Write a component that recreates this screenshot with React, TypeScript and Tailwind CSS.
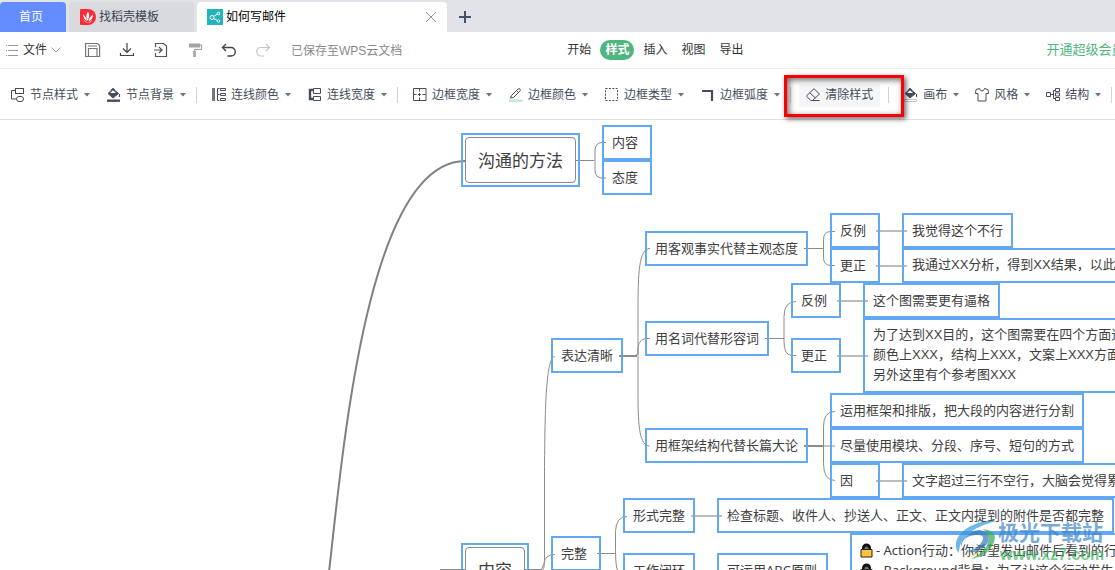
import React from "react";

function Icon({ children }: { children: React.ReactNode }) {
  return (
    <svg viewBox="0 0 14 14" className="size-3.5 shrink-0" fill="none" stroke="currentColor" strokeWidth="1" aria-hidden="true">
      {children}
    </svg>
  );
}

const icons = {
  nodeStyle: (
    <Icon>
      <rect x="4.5" y="0.5" width="8" height="5" />
      <rect x="5.5" y="8.5" width="7" height="5" rx="2.5" />
      <path d="M4.5 2.5h-4v8.5h5" />
    </Icon>
  ),
  bucket: (
    <Icon>
      <path d="M1 5.5 6 1l5.5 4.5L6 10z" fill="currentColor" />
      <path d="M3 5h6L6 2.2z" fill="#fff" stroke="none" />
      <path d="M4 2.5 6 .5l2 2M12.5 6v3" strokeWidth="1.2" />
      <path d="M0 12.7h13" strokeWidth="2.4" />
    </Icon>
  ),
  canvasBucket: (
    <Icon>
      <path d="M1 5.5 6 1l5.5 4.5L6 10z" fill="currentColor" />
      <path d="M3 5h6L6 2.2z" fill="#fff" stroke="none" />
      <path d="M4 2.5 6 .5l2 2M12.5 6v3" strokeWidth="1.2" />
      <path d="M.5 11.5h12v2H.5z" stroke="#c5c8cc" fill="#fff" />
    </Icon>
  ),
  lineColor: (
    <Icon>
      <path d="M1.5 0v13" stroke="#777" strokeWidth="3" />
      <path d="M5.5.5v12M5.5.5h2M5.5 6.5h2M5.5 12.5h2" />
      <path d="M8.5.5h5v2h-5zM8.5 5.5h5v2h-5zM8.5 10.5h5v2h-5z" />
    </Icon>
  ),
  lineWidth: (
    <Icon>
      <path d="M5 2H2v9h3" strokeWidth="2.4" />
      <path d="M5.5.5h7v5h-7zM5.5 8.5h7v4h-7z" fill="#fff" />
    </Icon>
  ),
  borderWidth: (
    <Icon>
      <path d="M.5.5h12.5v12H.5zM6.5.5v3M6.5 5v3M6.5 9.5v3M.5 6.5h3M5 6.5h3M9.5 6.5h3" />
    </Icon>
  ),
  borderColor: (
    <Icon>
      <path d="M2.500 7.500 9 1q1.500-.8 2 .2.900 1-.2 2L4.500 9.500l-3 .5zM7.500 2.500l2 2" />
      <path d="M0 12.7h13.5" stroke="#c9e8d2" strokeWidth="2.6" />
    </Icon>
  ),
  borderType: (
    <Icon>
      <rect x=".5" y=".5" width="12" height="12" strokeDasharray="2 1.4" />
    </Icon>
  ),
  borderRadius: (
    <Icon>
      <path d="M1 3h10v10" strokeWidth="2.2" />
    </Icon>
  ),
  eraser: (
    <Icon>
      <path d="M.8 7.5 8 .7l5.500 5.300L6.500 12.500H4.800L.8 8.500zM3.800 4.800l5.700 5.200M6 12.500h7.500" />
    </Icon>
  ),
  shirt: (
    <Icon>
      <path d="M4.500.5 1 1.500.5 5.500h2.500v7.500h8V5.500h2.500L13 1.500 9.500.5Q9 3 7 3T4.500.5z" />
    </Icon>
  ),
  structure: (
    <Icon>
      <path d="M.5 4.500h4v4h-4zM4.500 6.500h3M9.500 2.500h-2v8h2M9.500.5h4v3h-4zM9.500 5h4v3h-4zM9.500 9.500h4v3h-4z" />
    </Icon>
  ),
};

function Tool({ icon, label }: { icon: React.ReactNode; label: string }) {
  return (
    <button type="button" className="flex shrink-0 items-center gap-[5px] whitespace-nowrap">
      {icon}
      <span>{label}</span>
      <svg viewBox="0 0 6 4" className="ml-px h-1 w-1.5 shrink-0 text-[#6b7280]" fill="currentColor" aria-hidden="true">
        <path d="M0 0h6L3 3.5z" />
      </svg>
    </button>
  );
}

function Divider() {
  return <span className="h-4 w-px shrink-0 bg-[#cfd2d8]" />;
}

function Tabs() {
  return (
    <div className="flex h-8 shrink-0 items-end gap-[3px] bg-[#e1e3e8] text-xs">
      <button type="button" className="h-[30px] w-[66px] shrink-0 rounded-t-sm bg-[#638cff] pr-1 text-white">
        首页
      </button>
      <button type="button" className="flex h-[30px] w-[125px] shrink-0 items-center gap-[3px] rounded-t-sm bg-[#d8dade] pl-[11px] text-[#3c4353]">
        <svg viewBox="0 0 16 16" className="size-4" aria-hidden="true">
          <path d="M1 0h7a8 8 0 0 1 0 16H1a1 1 0 0 1-1-1V1a1 1 0 0 1 1-1z" fill="#fb2b37" />
          <path d="M8 2.500q2.500 4-.5 9.500-2.500-5 .5-9.500zM3 5q3 2.500 4 7Q3 9.500 3 5zM13 5.500q0 5-4.500 7Q9 8 13 5.500zM3 10.500l5 3.500 4.500-3q-2 3.200-4.500 3.200T3 10.500z" fill="#fff" />
        </svg>
        找稻壳模板
      </button>
      <div className="flex h-[30px] w-[250px] shrink-0 items-center gap-[3px] rounded-t-sm bg-white px-2.5 text-black">
        <svg viewBox="0 0 16 16" className="size-4" aria-hidden="true">
          <path d="M0 0h16v16H0z" fill="#1fb5bd" />
          <g fill="none" stroke="#fff">
            <circle cx="5" cy="8.5" r="2" />
            <circle cx="11.5" cy="4.5" r="1.3" />
            <circle cx="11.5" cy="12" r="1.3" />
            <path d="M6.5 7.5 10.5 5M6.5 9.5l4 2" />
          </g>
        </svg>
        <span>如何写邮件</span>
        <button type="button" aria-label="关闭" className="ml-auto text-[#8993b3]">
          <svg viewBox="0 0 12 12" className="size-3" fill="none" stroke="currentColor">
            <path d="m1 1 10 10M11 1 1 11" />
          </svg>
        </button>
      </div>
      <button type="button" aria-label="新建" className="ml-2 flex h-[30px] items-center text-[#43506f]">
        <svg viewBox="0 0 14 14" className="size-3.5" fill="none" stroke="currentColor" strokeWidth="2">
          <path d="M7 1v12M1 7h12" />
        </svg>
      </button>
    </div>
  );
}

function QuickButton({ label, tone, children }: { label: string; tone: string; children: React.ReactNode }) {
  return (
    <button type="button" aria-label={label} className={`shrink-0 ${tone}`}>
      <svg viewBox="0 0 16 16" className="size-4" fill="none" stroke="currentColor" strokeWidth="1.2">
        {children}
      </svg>
    </button>
  );
}

function MenuBar() {
  return (
    <div className="flex h-[37px] shrink-0 items-center border-b border-[#eeeff0] pl-1.5 text-xs whitespace-nowrap text-[#333]">
      <button type="button" className="flex shrink-0 items-center gap-1">
        <svg viewBox="0 0 13 12" className="h-3 w-[13px]" stroke="#999" aria-hidden="true">
          <path d="M0 1.5h1M2 1.5h10M0 6.500h1M2 6.500h10M0 11.500h1M2 11.500h10" />
        </svg>
        文件
        <svg viewBox="0 0 10 6" className="h-1.5 w-2.5" fill="none" stroke="#999" aria-hidden="true">
          <path d="m.5.5 4.500 4.500L9.500.5" />
        </svg>
      </button>
      <div className="ml-6 flex shrink-0 items-center gap-[18px]">
        <QuickButton label="保存" tone="text-[#777]">
          <path d="M.6 1.500h12l2 2v11H.6zM3.500 14V6.500h8.500V14M3 4h9" />
        </QuickButton>
        <QuickButton label="下载" tone="text-[#444]">
          <path d="M8 1v9M4 6.500l4 4 4-4M1.500 11v2.500h13V11" />
        </QuickButton>
        <QuickButton label="导入" tone="text-[#555]">
          <path d="M2.500 5V1.500h8L13.500 4v10.500h-11V11M1 8h8M6 5l3 3-3 3" />
        </QuickButton>
        <QuickButton label="格式刷" tone="text-[#a3a3a3]">
          <path d="M2 3.500h11" strokeWidth="4" />
          <path d="M13 3h1.500v4.500h-7v2" />
          <path d="M7.500 9v6" strokeWidth="2.6" />
        </QuickButton>
        <QuickButton label="撤销" tone="text-[#444]">
          <path d="M5 2 1.500 5.500 5 9M1.500 5.500H10a4.200 4.200 0 0 1 0 8.500H6.500" strokeWidth="1.4" />
        </QuickButton>
        <QuickButton label="重做" tone="text-[#c4c4c4]">
          <path d="m11 2 3.500 3.500L11 9M14.500 5.500H6A4.200 4.200 0 0 0 6 14h3.500" />
        </QuickButton>
      </div>
      <span className="ml-5 pt-0.5 text-[#8a8a8a]">已保存至WPS云文档</span>
      <nav className="ml-40 flex shrink-0 items-center">
        <button type="button" className="px-[5px]">开始</button>
        <button type="button" className="mx-1 h-5 rounded-full bg-[#4fb680] px-[5px] font-bold text-white">样式</button>
        <button type="button" className="px-[5px]">插入</button>
        <button type="button" className="ml-1 px-[5px]">视图</button>
        <button type="button" className="ml-1 px-[5px]">导出</button>
      </nav>
      <a href="#vip" className="mr-auto ml-[298px] shrink-0 text-[13px] text-[#4fb680]">开通超级会员</a>
    </div>
  );
}

function Toolbar() {
  return (
    <div className="flex h-[51px] shrink-0 items-center border-b border-[#e2e2e4] pt-0.5 pl-[11px] text-xs text-[#454d5c]">
      <div className="flex shrink-0 gap-[17px]">
        <Tool icon={icons.nodeStyle} label="节点样式" />
        <Tool icon={icons.bucket} label="节点背景" />
      </div>
      <div className="ml-2.5 flex shrink-0 items-center gap-[15px]">
        <Divider />
        <div className="flex gap-[17px]">
          <Tool icon={icons.lineColor} label="连线颜色" />
          <Tool icon={icons.lineWidth} label="连线宽度" />
        </div>
      </div>
      <div className="ml-2.5 flex shrink-0 items-center gap-[15px]">
        <Divider />
        <div className="flex gap-[17px]">
          <Tool icon={icons.borderWidth} label="边框宽度" />
          <Tool icon={icons.borderColor} label="边框颜色" />
          <Tool icon={icons.borderType} label="边框类型" />
          <Tool icon={icons.borderRadius} label="边框弧度" />
        </div>
      </div>
      <div className="ml-2.5 flex shrink-0 items-center gap-2">
        <Divider />
        <div className="relative">
          <button type="button" className="flex h-[23px] items-center gap-[5px] bg-[#f4f6f8] px-[7px] whitespace-nowrap">
            {icons.eraser}
            清除样式
          </button>
          <div className="pointer-events-none absolute -top-[9px] -left-[15px] z-20 h-[42px] w-[120px] border-[3px] border-[#fe0000] shadow-[2px_2px_5px_rgba(0,0,0,0.6),inset_2px_2px_6px_rgba(0,0,0,0.6)]" />
        </div>
        <Divider />
      </div>
      <div className="ml-[15px] flex shrink-0 items-center gap-4">
        <Tool icon={icons.canvasBucket} label="画布" />
        <Tool icon={icons.shirt} label="风格" />
        <Tool icon={icons.structure} label="结构" />
      </div>
      <div className="ml-2.5 flex">
        <Divider />
      </div>
    </div>
  );
}

const nodes: { text: string; place: string }[] = [
  { text: "内容", place: "left-[602px] top-[5px] w-[50px]" },
  { text: "态度", place: "left-[602px] top-[40px] w-[50px]" },
  { text: "用客观事实代替主观态度", place: "left-[645px] top-[111px] w-[163px]" },
  { text: "反例", place: "left-[830px] top-[93px] w-[50px]" },
  { text: "更正", place: "left-[830px] top-[128px] w-[50px]" },
  { text: "我觉得这个不行", place: "left-[902px] top-[93px] w-[111px]" },
  { text: "我通过XX分析，得到XX结果，以此", place: "left-[902px] top-[128px] w-[290px] font-['Liberation_Sans','Noto_Sans_CJK_SC',sans-serif]" },
  { text: "用名词代替形容词", place: "left-[645px] top-[201px] w-[124px]" },
  { text: "反例", place: "left-[791px] top-[163px] w-[50px]" },
  { text: "更正", place: "left-[791px] top-[218px] w-[50px]" },
  { text: "这个图需要更有逼格", place: "left-[863px] top-[163px] w-[137px]" },
  { text: "为了达到XX目的，这个图需要在四个方面进\n颜色上XXX，结构上XXX，文案上XXX方面\n另外这里有个参考图XXX", place: "left-[863px] top-[198px] w-[320px] font-['Liberation_Sans','Noto_Sans_CJK_SC',sans-serif]" },
  { text: "表达清晰", place: "left-[551px] top-[218px] w-[72px]" },
  { text: "用框架结构代替长篇大论", place: "left-[645px] top-[308px] w-[163px]" },
  { text: "运用框架和排版，把大段的内容进行分割", place: "left-[830px] top-[273px] w-[254px]" },
  { text: "尽量使用模块、分段、序号、短句的方式", place: "left-[830px] top-[308px] w-[254px]" },
  { text: "因", place: "left-[830px] top-[343px] w-[50px]" },
  { text: "文字超过三行不空行，大脑会觉得累", place: "left-[902px] top-[343px] w-[290px]" },
  { text: "形式完整", place: "left-[623px] top-[378px] w-[72px]" },
  { text: "检查标题、收件人、抄送人、正文、正文内提到的附件是否都完整", place: "left-[717px] top-[378px] w-[397px]" },
  { text: "完整", place: "left-[551px] top-[416px] w-[50px]" },
  { text: "工作闭环", place: "left-[623px] top-[433px] w-[72px]" },
  { text: "可运用ABC原则", place: "left-[717px] top-[433px] w-[111px]" },
];

function Lock() {
  return (
    <svg viewBox="0 0 13 15" className="h-[15px] w-[13px] shrink-0" aria-hidden="true">
      <path d="M2 7V5a4.500 4.500 0 0 1 9 0v2z" fill="#111" />
      <path d="M4.500 7V5q2-3 4 0v2z" fill="#777" />
      <path d="M1 6.500h11v7.500H1z" fill="#fcc43c" stroke="#222" />
    </svg>
  );
}

function MindMap() {
  return (
    <main className="relative min-h-0 flex-1 overflow-hidden bg-white font-['Noto_Sans','Noto_Sans_CJK_SC',sans-serif] text-[13px] leading-5 text-[#404040]">
      <svg className="absolute top-0 left-0 h-[450px] w-[1115px]" fill="none" stroke="#8c8c8c" aria-hidden="true">
        <path d="M329 452C343 330 367 42 465 41" strokeWidth="2" stroke="#808080" />
        <path d="M576 40.500h18M606 22.500h-4q-6.500 0-7 8v20q.5 7.500 7 7.500h4" />
        <path d="M804 128.500h19M835 111.500h-4q-7.500 0-7.500 8v18q0 8 7.500 8h4" />
        <path d="M765 218.500h19M796 181.500q-12 0-12 15v25q0 14 8 14h4" />
        <path d="M619 236h18" strokeWidth="2" />
        <path d="M650 128.500c-11 0-12 24-12 62v84c0 34 2 51 11.500 51.500M650 218.500q-11-1-12 9v6l-3 2.500" />
        <path d="M804 326h19" strokeWidth="2" />
        <path d="M835 291.500q-11.500 0-11.500 15v37q0 17 11.500 17M823 326h12" />
        <path d="M555 236.500c-9 0-10 50-10.500 110v94c0 6-1 9-2 9.500M555 434.500q-10 0-11 9l-3 7" />
        <path d="M597 433.500h18M627 396.500q-11 0-11.500 15v19q0 22 4 22" />
        <path d="M525 449.500h17M440 449.500h25" />
        <g stroke="#bcbcbc" strokeWidth="2">
          <path d="M876 111h31M876 146h31M837 181h31M837 236h31M876 361h31M691 396h31" />
        </g>
      </svg>
      {[
        { text: "沟通的方法", place: "left-[461px] top-[13px] w-[119px]" },
        { text: "内容", place: "left-[461px] top-[423px] w-[68px]" },
      ].map((n) => (
        <div key={n.text} className={`absolute h-[54px] border-2 border-[#62a8f3] p-0.5 ${n.place}`}>
          <div className="flex h-full items-center justify-center rounded border border-[#8a8a8a] pt-0.5 text-[17px] whitespace-nowrap">{n.text}</div>
        </div>
      ))}
      {nodes.map((n) => (
        <div key={n.place} className={`absolute border-2 border-[#62a8f3] px-2 pt-[5px] pb-1.5 whitespace-pre ${n.place}`}>
          {n.text}
        </div>
      ))}
      <div className="absolute top-[413px] left-[850px] w-[340px] border-2 border-[#62a8f3] px-2 py-[5px] whitespace-nowrap">
        <p className="flex items-center gap-[3px]"><Lock /><span>- Action行动：你希望发出邮件后看到的行</span></p>
        <p className="flex items-center gap-[3px]"><Lock /><span>- Background背景：为了让这个行动发生</span></p>
      </div>
      <div className="absolute top-[399px] left-[954px] flex opacity-70">
        <svg viewBox="0 0 44 42" className="h-[42px] w-11" aria-hidden="true">
          <path d="M43 2C24 0 4 11 2 24q-1 6 3 10 0-14 13-22Q29 5 43 2z" fill="#2f9be0" />
          <path d="M7 30Q7 17 22 16q11-1 5 8-5 7-14 8 7 3 13-1 13-8 7-17-8-6-17 0Q5 20 7 30z" fill="#3577be" />
          <path d="M29 10q15 2 11 13-5 14-23 17 14-7 17-16 2-9-5-14z" fill="#35a957" />
          <path d="M2 39q17 1 25-10-3 11-25 10z" fill="#e5d943" />
        </svg>
        <div className="whitespace-nowrap">
          <p className="font-['Noto_Sans_CJK_SC',sans-serif] text-[21px] leading-6 font-bold text-[#3e86cc]">极光下载站</p>
          <p className="pt-1 pl-0.5 font-['Liberation_Sans',sans-serif] text-base leading-4 font-bold text-[#48b768]">www.xz7.com</p>
        </div>
      </div>
    </main>
  );
}

export default function App() {
  return (
    <div className="flex h-screen flex-col overflow-hidden bg-white font-['Liberation_Sans','Noto_Sans_CJK_SC',sans-serif]">
      <Tabs />
      <MenuBar />
      <Toolbar />
      <MindMap />
    </div>
  );
}
